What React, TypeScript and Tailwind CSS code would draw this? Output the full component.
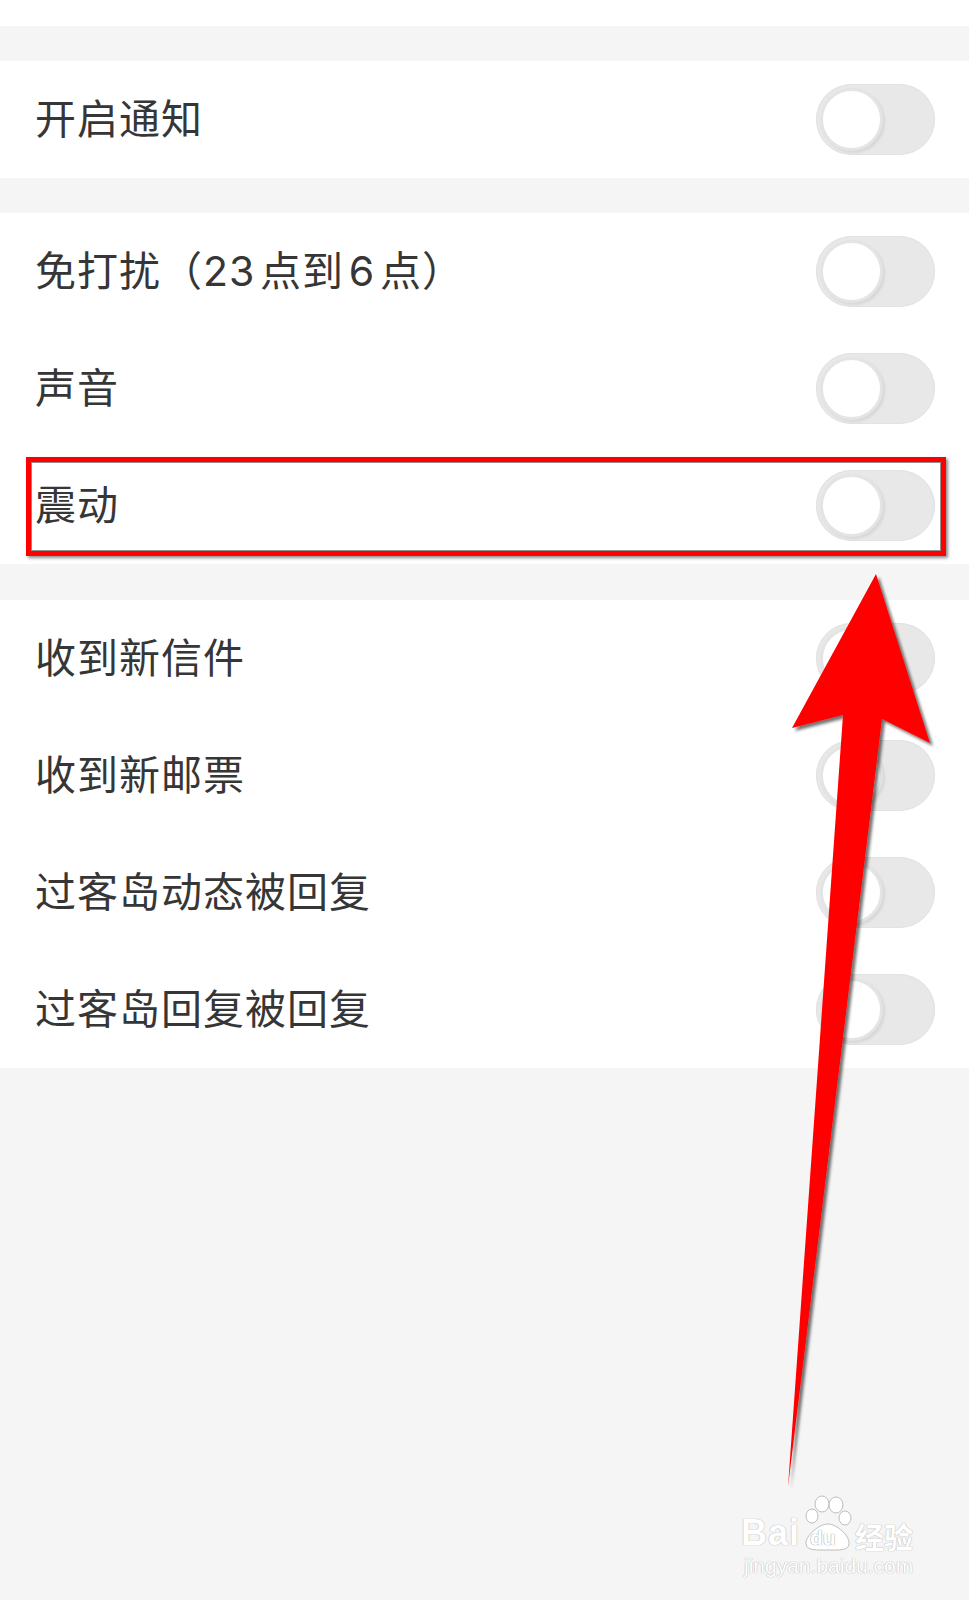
import React from "react";

const sections: string[][] = [
  ["开启通知"],
  ["免打扰（23\u200a点到\u200a6\u200a点）", "声音", "震动"],
  ["收到新信件", "收到新邮票", "过客岛动态被回复", "过客岛回复被回复"],
];

function Toggle() {
  return (
    <div className="w-[119px] h-[71px] rounded-full bg-[#e8e8e8] p-[4px] flex items-center shadow-[inset_0_0_0_1px_#e2e2e2]">
      <div className="w-[63px] h-[63px] rounded-full bg-white border-[3px] border-[#e4e4e4] shadow-[2px_2px_3px_rgba(0,0,0,0.08)]" />
    </div>
  );
}

function Row({ label }: { label: string }) {
  return (
    <div className="h-[117px] flex items-center justify-between pl-[35px] pr-[34px]">
      <span className="text-[41px] leading-none tracking-[1px] text-[#363636]">{label}</span>
      <Toggle />
    </div>
  );
}

function Arrow() {
  return (
    <svg
      className="absolute left-0 top-0 pointer-events-none"
      width="969"
      height="1600"
      viewBox="0 0 969 1600"
    >
      <defs>
        <filter id="arrowShadow" x="-20%" y="-5%" width="140%" height="110%">
          <feDropShadow dx="3" dy="3" stdDeviation="1.6" floodColor="#000" floodOpacity="0.55" />
        </filter>
      </defs>
      <polygon
        points="876,574 930,743 882,719 788,1487 843,715 792,728"
        fill="#ff0000"
        filter="url(#arrowShadow)"
      />
    </svg>
  );
}

function Watermark() {
  return (
    <div className="absolute left-[741px] top-[1494px] flex flex-col items-start text-white [text-shadow:0_0_1px_#b5b5b5,0_0_1px_#b5b5b5]">
      <div className="flex items-end h-[58px]">
        <span className="font-['Liberation_Sans',sans-serif] font-bold text-[36px] leading-none tracking-[1px] mb-[1px]">
          Bai
        </span>
        <div className="relative w-[50px] h-[58px] ml-[3px]">
          <svg className="absolute left-0 top-0" width="50" height="58" viewBox="0 0 50 58">
            <g fill="#ffffff" stroke="#bdbdbd" strokeWidth="1">
              <ellipse cx="9" cy="22" rx="6" ry="7" />
              <ellipse cx="19" cy="10" rx="7" ry="8" />
              <ellipse cx="33" cy="11" rx="7" ry="8" />
              <ellipse cx="42" cy="24" rx="6" ry="7" />
              <path d="M25 30 C 34 30, 47 42, 46 50 C 45 57, 36 56, 25 56 C 14 56, 4 57, 3 50 C 2 42, 16 30, 25 30 Z" />
            </g>
          </svg>
          <span className="absolute left-[7px] top-[33px] font-['Liberation_Sans',sans-serif] font-bold text-[21px] leading-none text-white [text-shadow:0_0_1px_#9e9e9e,0_0_1px_#9e9e9e]">
            du
          </span>
        </div>
        <span className="ml-[2px] font-['Noto_Sans_CJK_SC',sans-serif] font-bold text-[29px] leading-none mb-[1px]">
          经验
        </span>
      </div>
      <span className="mt-[3px] ml-[3px] font-['Liberation_Sans',sans-serif] text-[21px] leading-none">
        jingyan.baidu.com
      </span>
    </div>
  );
}

export default function App() {
  return (
    <div className="relative min-h-[1600px] bg-[#f5f5f5] font-['Inter','Noto_Sans_CJK_SC',sans-serif] overflow-hidden">
      <div className="h-[26px] bg-white" />
      <div className="h-[35px]" />
      <section className="bg-white">
        {sections[0].map((l) => (
          <Row key={l} label={l} />
        ))}
      </section>
      <div className="h-[35px]" />
      <section className="bg-white">
        {sections[1].map((l) => (
          <Row key={l} label={l} />
        ))}
      </section>
      <div className="h-[36px]" />
      <section className="bg-white">
        {sections[2].map((l) => (
          <Row key={l} label={l} />
        ))}
      </section>

      {/* annotation box around 震动 */}
      <div className="absolute left-[26px] top-[457px] w-[920px] h-[99px] border-[5px] border-[#ff0000] shadow-[inset_0_0_0_1px_#8f8f8f,2px_2px_3px_rgba(0,0,0,0.45)]" />

      <Arrow />
      <Watermark />
    </div>
  );
}
